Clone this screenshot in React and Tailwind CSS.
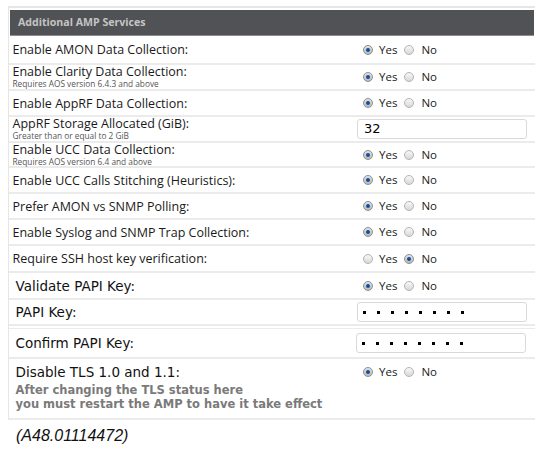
import React from "react";

const OPEN = { fontFamily: '"Open Sans", "Liberation Sans", sans-serif' };
const VERD = { fontFamily: '"DejaVu Sans", Verdana, sans-serif' };

function Radio({ checked }) {
  return (
    <span
      className={`inline-flex h-[10px] w-[10px] shrink-0 items-center justify-center rounded-full border bg-linear-to-b ${
        checked ? "border-[#8e8e8e] from-[#e2e2e2] to-[#b9b9b9]" : "border-[#b3b3b3] from-[#f8f8f8] to-[#d8d8d8]"
      }`}
    >
      {checked && <span className="h-[4px] w-[4px] rounded-full bg-[#0f4f9c]" />}
    </span>
  );
}

function YesNo({ yes = true }) {
  return (
    <div className="flex items-center pl-[6px] text-[11.5px] leading-[14px] text-[#1a1a1a]" style={OPEN}>
      <Radio checked={yes} />
      <span className="ml-[6px]">Yes</span>
      <span className="ml-[7px] flex"><Radio checked={!yes} /></span>
      <span className="ml-[7px]">No</span>
    </div>
  );
}

function Row({ h, label, sub, control, big }) {
  return (
    <div className={`flex items-center border-b-2 border-[#ebebeb] ${h}`}>
      <div className={big ? "w-[348px] pl-[6.5px]" : "w-[348px] pl-[3.5px]"}>
        {big ? (
          <div className="text-[13.5px] leading-[16px] text-[#111]" style={VERD}>{label}</div>
        ) : (
          <div style={OPEN}>
            <div className="text-[12.5px] leading-[13px] text-[#1a1a1a]">{label}</div>
            {sub && <div className="text-[8.3px] leading-[11px] text-[#555]">{sub}</div>}
          </div>
        )}
      </div>
      <div className="flex-1">{control}</div>
    </div>
  );
}

function Dots() {
  return (
    <div className="flex h-[20px] w-[170px] items-center gap-[11px] rounded-[3px] border border-[#d9d9d9] bg-white pl-[5px]">
      {Array.from({ length: 8 }).map((_, i) => (
        <span key={i} className="h-[3px] w-[3px] bg-black" />
      ))}
    </div>
  );
}

export default function App() {
  return (
    <div className="h-[452px] w-[543px] overflow-hidden bg-white">
      <div className="ml-[8px] mt-[6px] w-[527px] border-l border-t-2 border-[#e6e6e6]">
        <div className="ml-[1px] mt-[2px] flex h-[26px] w-[524px] items-center border-b border-[#8c8d90] bg-[#515256] pl-[8px]">
          <span className="text-[10.6px] font-bold text-[#c4c4c4]" style={OPEN}>Additional AMP Services</span>
        </div>
        <Row h="h-[29px]" label="Enable AMON Data Collection:" control={<YesNo />} />
        <Row h="h-[26px]" label="Enable Clarity Data Collection:" sub="Requires AOS version 6.4.3 and above" control={<YesNo />} />
        <Row h="h-[26px]" label="Enable AppRF Data Collection:" control={<YesNo />} />
        <Row
          h="h-[26px]"
          label="AppRF Storage Allocated (GiB):"
          sub="Greater than or equal to 2 GiB"
          control={
            <div className="flex h-[20px] w-[170px] items-center rounded-[3px] border border-[#d9d9d9] bg-white pl-[6px] text-[13px] text-black" style={VERD}>
              32
            </div>
          }
        />
        <Row h="h-[25px]" label="Enable UCC Data Collection:" sub="Requires AOS version 6.4 and above" control={<YesNo />} />
        <Row h="h-[26px]" label="Enable UCC Calls Stitching (Heuristics):" control={<YesNo />} />
        <Row h="h-[26px]" label="Prefer AMON vs SNMP Polling:" control={<YesNo />} />
        <Row h="h-[26px]" label="Enable Syslog and SNMP Trap Collection:" control={<YesNo />} />
        <Row h="h-[27px]" label="Require SSH host key verification:" control={<YesNo yes={false} />} />
        <Row h="h-[27px]" big label="Validate PAPI Key:" control={<YesNo />} />
        <Row h="h-[26px]" big label="PAPI Key:" control={<Dots />} />
        <div className="h-[2px]" />
        <div className="flex h-[31px] items-center border-b-2 border-t border-[#ebebeb]">
          <div className="w-[347px] pl-[6.5px] text-[13.5px] leading-[16px] text-[#111]" style={VERD}>Confirm PAPI Key:</div>
          <div className="flex-1"><Dots /></div>
        </div>
        <div className="flex h-[61px] items-start border-b-2 border-[#ebebeb] pt-[5px]">
          <div className="w-[348px] pl-[6.5px]" style={VERD}>
            <div className="text-[13.5px] leading-[16px] text-[#111]">Disable TLS 1.0 and 1.1:</div>
            <div className="mt-[3px] whitespace-nowrap text-[11.5px] font-bold leading-[14px] text-[#7a7a7a]">After changing the TLS status here</div>
            <div className="whitespace-nowrap text-[11.5px] font-bold leading-[14px] text-[#7a7a7a]">you must restart the AMP to have it take effect</div>
          </div>
          <div className="flex h-[16px] flex-1 items-center"><YesNo /></div>
        </div>
      </div>
      <div className="mt-[7px] pl-[16px] text-[16px] italic leading-[18px] text-[#111]" style={{ fontFamily: '"Liberation Sans", Arial, sans-serif' }}>
        (A48.01114472)
      </div>
    </div>
  );
}
